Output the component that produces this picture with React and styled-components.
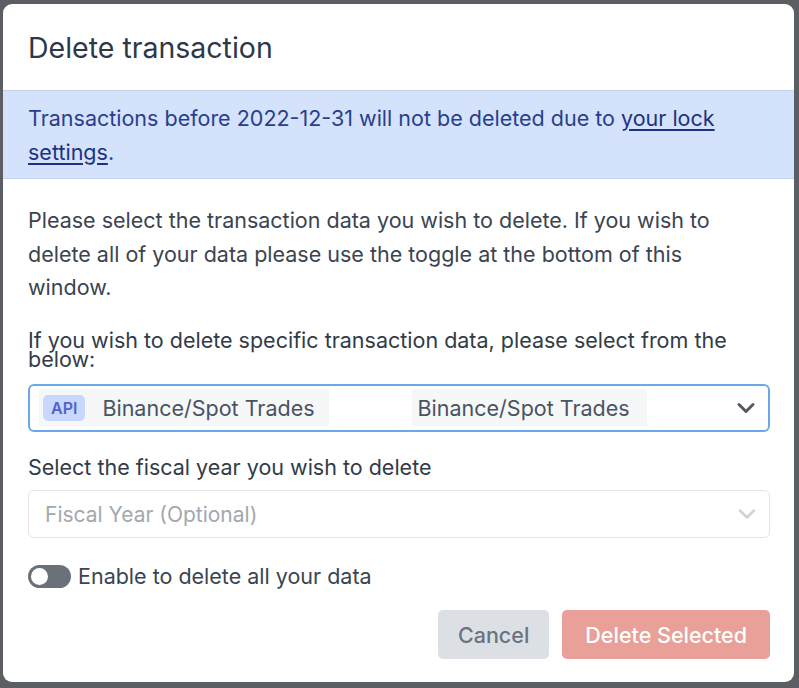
import React from "react";
import styled, { createGlobalStyle } from "styled-components";

const GlobalStyle = createGlobalStyle`
  html, body {
    margin: 0;
    padding: 0;
    background: #5b5e62;
  }
  * { box-sizing: border-box; }
`;

const Backdrop = styled.div`
  width: 799px;
  height: 688px;
  padding: 4px 5px 6px 3px;
  background: #5b5e62;
  font-family: Inter, "Noto Sans", sans-serif;
`;

const Modal = styled.div`
  height: 100%;
  background: #fff;
  border-radius: 9px;
  display: flex;
  flex-direction: column;
  overflow: hidden;
`;

const Header = styled.div`
  height: 86px;
  display: flex;
  align-items: center;
  padding: 0 25px;
`;

const Title = styled.h2`
  margin: 0;
  font-size: 28.5px;
  font-weight: 400;
  color: #2d3848;
`;

const Alert = styled.div`
  background: #d4e2fb;
  border-top: 1px solid #c3d1ec;
  border-bottom: 1px solid #c3d1ec;
  padding: 11px 25px 9px;
  font-size: 21.5px;
  line-height: 33.5px;
  color: #283f8c;
`;

const AlertLink = styled.a`
  color: #1d3282;
  text-decoration: underline;
  text-underline-offset: 3px;
`;

const Body = styled.div`
  flex: 1;
  display: flex;
  flex-direction: column;
  padding: 25px 24px 23px 25px;
`;

const Paragraph = styled.p`
  margin: 0;
  font-size: 21.5px;
  line-height: 33.5px;
  color: #3b4451;
`;

const Label = styled.div`
  margin-top: ${(p) => p.$top || 0}px;
  font-size: 21.5px;
  line-height: 19.5px;
  color: #323b48;
`;

const Select = styled.div`
  margin-top: ${(p) => p.$top || 0}px;
  height: 48px;
  display: flex;
  align-items: center;
  padding: 0 12px 0 9px;
  border-radius: 6px;
  border: ${(p) => (p.$focused ? "2px solid #6aa8ea" : "1px solid #e1e3e6")};
`;

const Values = styled.div`
  flex: 1;
  display: flex;
  align-items: center;
  gap: 83px;
`;

const Chip = styled.div`
  height: 37px;
  display: flex;
  align-items: center;
  gap: 17px;
  padding: 0 ${(p) => p.$right || 6}px 0 ${(p) => p.$left || 6}px;
  background: #f6f7f8;
  font-size: 21.5px;
  color: #4a5361;
`;

const Badge = styled.span`
  background: #c8d8fc;
  color: #5261cf;
  font-size: 16px;
  font-weight: 600;
  padding: 3px 8px;
  border-radius: 5px;
`;

const Placeholder = styled.span`
  padding-left: 7px;
  font-size: 21px;
  color: #a2a8ae;
`;

const Chevron = ({ color, width }) => (
  <svg width="20" height="14" viewBox="0 0 20 14">
    <path
      d="M3 3.5 L10 10.5 L17 3.5"
      fill="none"
      stroke={color}
      strokeWidth={width}
      strokeLinecap="round"
      strokeLinejoin="round"
    />
  </svg>
);

const ToggleRow = styled.label`
  margin-top: 25px;
  display: flex;
  align-items: center;
  gap: 7px;
  font-size: 21.5px;
  color: #3b4451;
`;

const Switch = styled.span`
  width: 43px;
  height: 23px;
  border-radius: 12px;
  background: #6b7178;
  display: flex;
  align-items: center;
  padding-left: 3px;
`;

const Knob = styled.span`
  width: 17px;
  height: 17px;
  border-radius: 50%;
  background: #fff;
`;

const Footer = styled.div`
  margin-top: auto;
  display: flex;
  justify-content: flex-end;
  gap: 13px;
`;

const Button = styled.button`
  height: 49px;
  padding: 0 ${(p) => (p.$danger ? 23 : 20)}px;
  border: none;
  border-radius: 5px;
  font-family: inherit;
  font-size: 21.5px;
  font-weight: 500;
  background: ${(p) => (p.$danger ? "#e9a098" : "#dce0e4")};
  color: ${(p) => (p.$danger ? "#fff" : "#6b7380")};
`;

export default function App() {
  return (
    <Backdrop>
      <GlobalStyle />
      <Modal>
        <Header>
          <Title>Delete transaction</Title>
        </Header>
        <Alert>
          Transactions before 2022-12-31 will not be deleted due to{" "}
          <AlertLink href="#">your lock settings</AlertLink>.
        </Alert>
        <Body>
          <Paragraph>
            Please select the transaction data you wish to delete. If you wish to
            delete all of your data please use the toggle at the bottom of this
            window.
          </Paragraph>
          <Label $top={26}>
            If you wish to delete specific transaction data, please select from the
            below:
          </Label>
          <Select $focused $top={14}>
            <Values>
              <Chip $left={4} $right={14}>
                <Badge>API</Badge>
                Binance/Spot Trades
              </Chip>
              <Chip $left={6} $right={17}>Binance/Spot Trades</Chip>
            </Values>
            <Chevron color="#555a60" width={3} />
          </Select>
          <Label $top={26}>Select the fiscal year you wish to delete</Label>
          <Select $top={13}>
            <Values>
              <Placeholder>Fiscal Year (Optional)</Placeholder>
            </Values>
            <Chevron color="#cfd2d6" width={2.5} />
          </Select>
          <ToggleRow>
            <Switch>
              <Knob />
            </Switch>
            Enable to delete all your data
          </ToggleRow>
          <Footer>
            <Button>Cancel</Button>
            <Button $danger>Delete Selected</Button>
          </Footer>
        </Body>
      </Modal>
    </Backdrop>
  );
}
